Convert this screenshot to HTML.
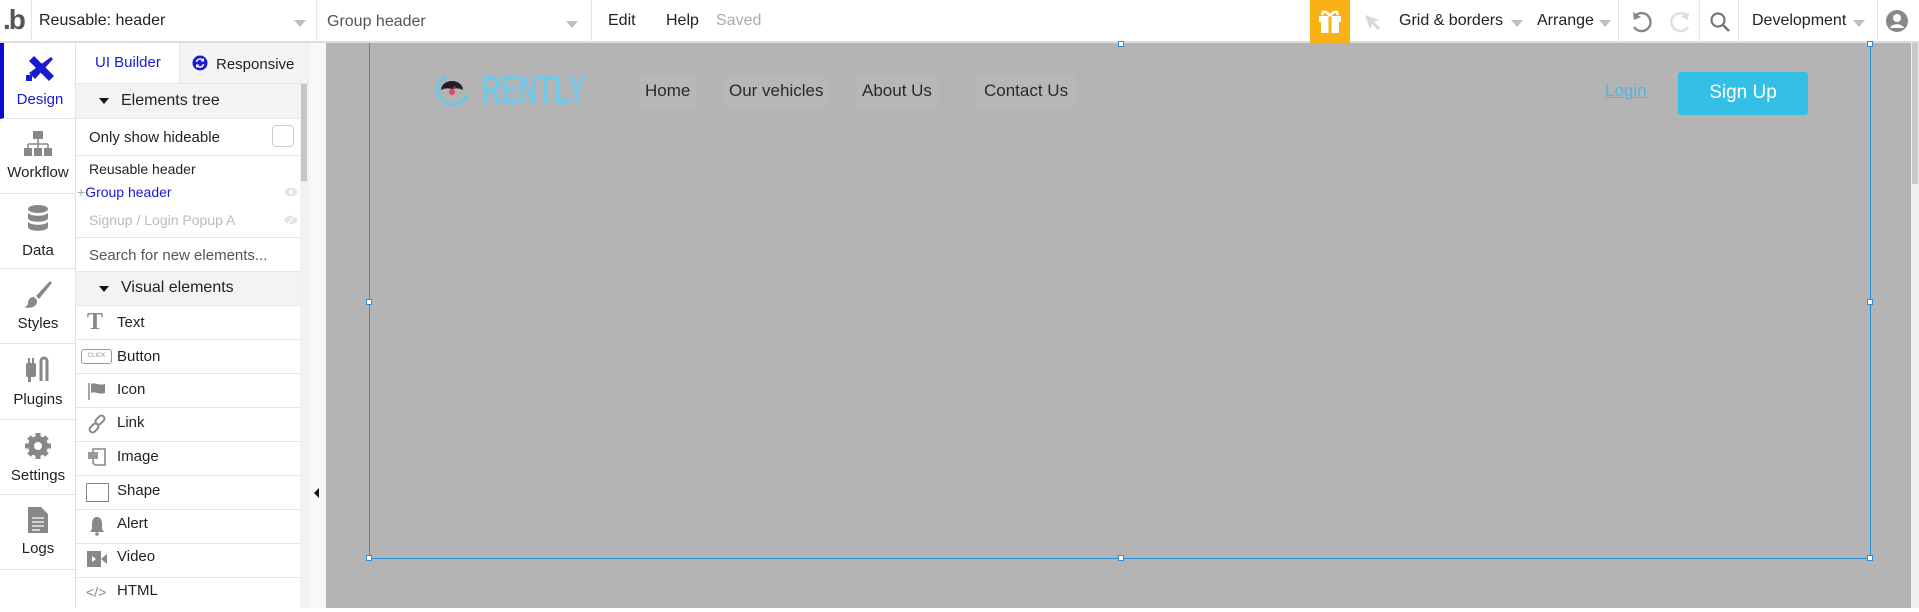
<!DOCTYPE html>
<html><head><meta charset="utf-8"><style>
*{box-sizing:border-box;margin:0;padding:0}
body{width:1919px;height:608px;overflow:hidden;font-family:"Liberation Sans",sans-serif;background:#fff;position:relative;color:#222}
.a{position:absolute}
.t{position:absolute;white-space:nowrap}
.arr{position:absolute;width:0;height:0;border-left:6px solid transparent;border-right:6px solid transparent;border-top:7px solid #b8c0c8}
.sep{position:absolute;top:0;width:1px;height:43px;background:#e6e6e6}
.side{position:absolute;left:0;width:76px;text-align:center;font-size:15px;color:#222;border-bottom:1px solid #e2e2e2}
.row{position:absolute;left:76px;width:224px;border-bottom:1px solid #e8e8e8;font-size:15px}
.nav{position:absolute;top:75px;height:33px;background:#b7b7b7;font-size:17px;color:#2a2a2a;line-height:31px;padding:0 6px}
.h{position:absolute;width:6px;height:6px;background:#fff;border:1px solid #2b8fd6}
</style></head><body>
<div class="a" style="left:0;top:0;width:1919px;height:43px;border-bottom:2px solid #dcdcdc;background:#fff"></div>
<div class="t" style="left:3px;top:4px;font-size:28px;color:#555;font-weight:bold;letter-spacing:-2px">.b</div>
<div class="sep" style="left:31px"></div>
<div class="t" style="left:39px;top:12px;font-size:16px">Reusable: header</div>
<div class="arr" style="left:294px;top:20px"></div>
<div class="sep" style="left:316px"></div>
<div class="t" style="left:327px;top:13px;font-size:16px;color:#555">Group header</div>
<div class="arr" style="left:566px;top:21px"></div>
<div class="sep" style="left:591px"></div>
<div class="t" style="left:608px;top:12px;font-size:16px">Edit</div>
<div class="t" style="left:666px;top:12px;font-size:16px">Help</div>
<div class="t" style="left:716px;top:12px;font-size:16px;color:#aaa">Saved</div>
<div class="a" style="left:1310px;top:0;width:40px;height:43px;background:#f8b215"></div>
<svg class="a" style="left:1316px;top:8px" width="28" height="26" viewBox="0 0 28 26"><rect x="3" y="8" width="22" height="6" fill="#fff"/><rect x="5" y="14" width="18" height="11" fill="#fff"/><rect x="12.5" y="8" width="3" height="17" fill="#f8b215"/><path d="M14 8C10 2 5 3 7 7M14 8c4-6 9-5 7-1" stroke="#fff" stroke-width="2.5" fill="none"/></svg>
<svg class="a" style="left:1362px;top:12px" width="22" height="22" viewBox="0 0 22 22"><path d="M3 3l14 5-5 2 6 6-2 2-6-6-2 5z" fill="#d8d8d8"/></svg>
<div class="t" style="left:1399px;top:12px;font-size:16px">Grid &amp; borders</div>
<div class="arr" style="left:1511px;top:20px"></div>
<div class="t" style="left:1537px;top:12px;font-size:16px">Arrange</div>
<div class="arr" style="left:1599px;top:20px"></div>
<div class="sep" style="left:1618px"></div>
<svg class="a" style="left:1628px;top:9px" width="26" height="26" viewBox="0 0 26 26"><path d="M8 6a9 9 0 1 1-2 12" stroke="#888" stroke-width="2.4" fill="none"/><path d="M5 3l1 8 7-3z" fill="#888"/></svg>
<svg class="a" style="left:1668px;top:9px" width="26" height="26" viewBox="0 0 26 26"><path d="M18 6a9 9 0 1 0 2 12" stroke="#ddd" stroke-width="2.4" fill="none"/><path d="M21 3l-1 8-7-3z" fill="#ddd"/></svg>
<div class="sep" style="left:1699px"></div>
<svg class="a" style="left:1708px;top:10px" width="24" height="24" viewBox="0 0 24 24"><circle cx="10" cy="10" r="6.5" stroke="#777" stroke-width="2.2" fill="none"/><path d="M15 15l6 6" stroke="#777" stroke-width="2.6"/></svg>
<div class="sep" style="left:1738px"></div>
<div class="t" style="left:1752px;top:12px;font-size:16px">Development</div>
<div class="arr" style="left:1853px;top:20px"></div>
<div class="sep" style="left:1877px"></div>
<svg class="a" style="left:1885px;top:9px" width="24" height="24" viewBox="0 0 24 24"><circle cx="12" cy="12" r="11" fill="#888"/><circle cx="12" cy="9" r="4" fill="#fff"/><path d="M5 19c2-5 12-5 14 0" fill="#fff"/></svg>

<div class="a" style="left:75px;top:43px;width:1px;height:565px;background:#e2e2e2"></div>
<div class="side" style="top:43px;height:76px;color:#1a1ad0;border-left:4px solid #0b0bcf">
<svg style="margin-top:10px" width="30" height="30" viewBox="0 0 30 30"><path d="M4 8l5-5 20 20-5 5z" fill="#1a1ad0"/><path d="M26 4l-22 16 6 6 18-20z" fill="#1a1ad0"/><rect x="1" y="22" width="6" height="6" fill="#1a1ad0"/></svg>
<div style="margin-top:4px">Design</div></div>
<div class="side" style="top:119px;height:75px">
<svg style="margin-top:11px" width="30" height="28" viewBox="0 0 30 28"><rect x="10" y="1" width="10" height="8" fill="#888"/><path d="M15 9v5M5 14h20M5 14v4M15 14v4M25 14v4" stroke="#888" stroke-width="1.5" fill="none"/><rect x="1" y="18" width="8" height="8" fill="#888"/><rect x="11" y="18" width="8" height="8" fill="#888"/><rect x="21" y="18" width="8" height="8" fill="#888"/></svg>
<div style="margin-top:2px">Workflow</div></div>
<div class="side" style="top:194px;height:75px">
<svg style="margin-top:10px" width="24" height="30" viewBox="0 0 24 30"><ellipse cx="12" cy="5" rx="10" ry="4" fill="#888"/><path d="M2 8c0 5 20 5 20 0v6c0 5-20 5-20 0zM2 17c0 5 20 5 20 0v6c0 5-20 5-20 0z" fill="#888"/></svg>
<div style="margin-top:4px">Data</div></div>
<div class="side" style="top:269px;height:75px">
<svg style="margin-top:10px" width="30" height="30" viewBox="0 0 30 30"><path d="M27 2L13 17l3 3 13-16z" fill="#888"/><path d="M11 18c-5 0-6 4-6 6s-2 4-4 4c6 2 14 0 13-7z" fill="#888"/></svg>
<div style="margin-top:2px">Styles</div></div>
<div class="side" style="top:344px;height:76px">
<svg style="margin-top:11px" width="30" height="30" viewBox="0 0 30 30"><rect x="3" y="8" width="10" height="14" rx="2" fill="#888"/><rect x="5" y="3" width="2" height="6" fill="#888"/><rect x="9" y="3" width="2" height="6" fill="#888"/><rect x="5" y="22" width="3" height="5" fill="#888"/><path d="M18 26V6a3 3 0 0 1 6 0v20" stroke="#888" stroke-width="3" fill="none"/></svg>
<div style="margin-top:2px">Plugins</div></div>
<div class="side" style="top:420px;height:75px">
<svg style="margin-top:11px" width="30" height="30" viewBox="0 0 30 30"><circle cx="15" cy="15" r="10" fill="#888"/><g stroke="#888" stroke-width="5"><path d="M15 2v26M2 15h26M6 6l18 18M24 6L6 24"/></g><circle cx="15" cy="15" r="4" fill="#fff"/></svg>
<div style="margin-top:2px">Settings</div></div>
<div class="side" style="top:495px;height:75px">
<svg style="margin-top:11px" width="22" height="28" viewBox="0 0 22 28"><path d="M1 1h13l7 7v19H1z" fill="#888"/><path d="M5 12h12M5 16h12M5 20h12M5 24h8" stroke="#fff" stroke-width="1.3"/></svg>
<div style="margin-top:2px">Logs</div></div>

<div class="a" style="left:179px;top:43px;width:129px;height:41px;background:#f4f4f4;border-left:1px solid #e4e4e4;border-bottom:1px solid #e4e4e4"></div>
<div class="a" style="left:76px;top:83px;width:103px;height:1px;background:#e4e4e4"></div>
<div class="t" style="left:95px;top:54px;font-size:15px;color:#1a1ad0">UI Builder</div>
<svg class="a" style="left:192px;top:55px" width="16" height="16" viewBox="0 0 16 16"><circle cx="8" cy="8" r="7.5" fill="#1a1ad0"/><path d="M4.5 7a3.6 3.6 0 0 1 6.5-1.5M11.5 9a3.6 3.6 0 0 1-6.5 1.5" stroke="#fff" stroke-width="1.5" fill="none"/><path d="M12 3v3.5H8.5zM4 13V9.5h3.5z" fill="#fff"/></svg>
<div class="t" style="left:216px;top:56px;font-size:15px">Responsive</div>
<div class="row" style="top:84px;height:35px;background:#f3f3f3"></div>
<div class="a" style="left:99px;top:98px;border-left:5px solid transparent;border-right:5px solid transparent;border-top:6px solid #111"></div>
<div class="t" style="left:121px;top:92px;font-size:16px">Elements tree</div>
<div class="row" style="top:119px;height:37px"></div>
<div class="t" style="left:89px;top:129px;font-size:15px">Only show hideable</div>
<div class="a" style="left:272px;top:125px;width:22px;height:22px;border:1px solid #ccc;border-radius:4px"></div>
<div class="row" style="top:156px;height:82px"></div>
<div class="t" style="left:89px;top:161px;font-size:14px">Reusable header</div>
<div class="t" style="left:77px;top:184px;font-size:14px;color:#1a1ad0"><span style="color:#aaa">+</span>Group header</div>
<div class="t" style="left:89px;top:212px;font-size:14px;color:#bbb">Signup / Login Popup A</div>
<svg class="a" style="left:284px;top:187px" width="14" height="10" viewBox="0 0 14 10"><ellipse cx="7" cy="5" rx="6.5" ry="4.2" fill="#e4e4e4"/><circle cx="7" cy="5" r="2" fill="#fff"/></svg>
<svg class="a" style="left:284px;top:215px" width="14" height="10" viewBox="0 0 14 10"><ellipse cx="7" cy="5" rx="6.5" ry="4.2" fill="#e4e4e4"/><path d="M3 10L11 0" stroke="#fff" stroke-width="1.2"/></svg>
<div class="row" style="top:238px;height:34px"></div>
<div class="t" style="left:89px;top:247px;font-size:15px;color:#555">Search for new elements...</div>
<div class="row" style="top:272px;height:34px;background:#f3f3f3"></div>
<div class="a" style="left:99px;top:286px;border-left:5px solid transparent;border-right:5px solid transparent;border-top:6px solid #111"></div>
<div class="t" style="left:121px;top:279px;font-size:16px">Visual elements</div>

<div class="row" style="top:306px;height:34px"></div><div class="t" style="left:87px;top:309px;font-size:24px;font-family:'Liberation Serif',serif;font-weight:bold;color:#888">T</div><div class="t" style="left:117px;top:314px;font-size:15px">Text</div>
<div class="row" style="top:340px;height:34px"></div><div class="a" style="left:81px;top:349px;width:31px;height:15px;border:1.5px solid #999;border-radius:3px;font-size:6px;color:#999;text-align:center;line-height:12px">CLICK</div><div class="t" style="left:117px;top:348px;font-size:15px">Button</div>
<div class="row" style="top:374px;height:34px"></div><svg class="a" style="left:88px;top:382px" width="20" height="18" viewBox="0 0 20 18"><path d="M1 1v17" stroke="#888" stroke-width="1.5"/><path d="M3 2c5-2 7 2 14 0v9c-7 2-9-2-14 0z" fill="#888"/></svg><div class="t" style="left:117px;top:381px;font-size:15px">Icon</div>
<div class="row" style="top:408px;height:34px"></div><svg class="a" style="left:87px;top:414px" width="20" height="20" viewBox="0 0 20 20"><g stroke="#888" stroke-width="2" fill="none"><rect x="10" y="1" width="6" height="10" rx="3" transform="rotate(45 13 6)"/><rect x="4" y="9" width="6" height="10" rx="3" transform="rotate(45 7 14)"/></g></svg><div class="t" style="left:117px;top:414px;font-size:15px">Link</div>
<div class="row" style="top:442px;height:34px"></div><svg class="a" style="left:87px;top:447px" width="20" height="20" viewBox="0 0 20 20"><path d="M6 2h12v16H8l-2-2z" fill="none" stroke="#888" stroke-width="1.6"/><rect x="1" y="5" width="10" height="7" fill="#999"/></svg><div class="t" style="left:117px;top:448px;font-size:15px">Image</div>
<div class="row" style="top:476px;height:34px"></div><div class="a" style="left:86px;top:483px;width:23px;height:19px;border:1.5px solid #888"></div><div class="t" style="left:117px;top:482px;font-size:15px">Shape</div>
<div class="row" style="top:510px;height:34px"></div><svg class="a" style="left:89px;top:516px" width="16" height="20" viewBox="0 0 16 20"><path d="M8 1c-4 0-5 4-5 7v5l-2 3h14l-2-3V8c0-3-1-7-5-7z" fill="#888"/><circle cx="8" cy="18" r="1.8" fill="#888"/></svg><div class="t" style="left:117px;top:515px;font-size:15px">Alert</div>
<div class="row" style="top:544px;height:34px"></div><svg class="a" style="left:87px;top:551px" width="20" height="16" viewBox="0 0 20 16"><rect x="0" y="0" width="14" height="16" fill="#888"/><path d="M14 8l6-5v10z" fill="#888"/><path d="M5 5l4 3-4 3z" fill="#fff"/></svg><div class="t" style="left:117px;top:548px;font-size:15px">Video</div>
<div class="row" style="top:578px;height:34px;border:none"></div><div class="t" style="left:86px;top:584px;font-size:14px;color:#888">&lt;/&gt;</div><div class="t" style="left:117px;top:582px;font-size:15px">HTML</div>

<div class="a" style="left:300px;top:84px;width:8px;height:524px;background:#f2f2f2"></div>
<div class="a" style="left:301px;top:84px;width:6px;height:97px;background:#c6c6c6"></div>
<div class="a" style="left:308px;top:43px;width:18px;height:565px;background:#f8f8f8;border-left:1px solid #eee"></div>
<div class="a" style="left:314px;top:488px;border-top:5px solid transparent;border-bottom:5px solid transparent;border-right:5px solid #111"></div>

<div class="a" style="left:326px;top:43px;width:1593px;height:565px;background:#b4b4b4"></div>
<div class="a" style="left:1911px;top:43px;width:8px;height:565px;background:#f0f0f0"></div>
<div class="a" style="left:1912px;top:43px;width:6px;height:141px;background:#c8c8c8"></div>
<div class="a" style="left:369px;top:43px;width:1502px;height:516px;border:1px solid #2b8fd6;border-top:none"></div>
<div class="h" style="left:1118px;top:41px"></div><div class="h" style="left:1867px;top:41px"></div>
<div class="h" style="left:366px;top:299px"></div><div class="h" style="left:1867px;top:299px"></div>
<div class="h" style="left:366px;top:555px"></div><div class="h" style="left:1118px;top:555px"></div><div class="h" style="left:1867px;top:555px"></div>

<svg class="a" style="left:434px;top:72px" width="38" height="38" viewBox="0 0 38 38"><path d="M12 4A15 15 0 1 0 33 22" stroke="#6fc6e4" stroke-width="3.5" fill="none"/><path d="M7 18a11 9 0 0 1 22 0c-4-2-6-2-11-1-5-1-7-1-11 1z" fill="#1e1e24"/><circle cx="18" cy="20" r="3" fill="#e0496b"/><path d="M18 20l3-6" stroke="#e0496b" stroke-width="1"/></svg>
<div class="t" style="left:482px;top:68px;font-size:40px;font-weight:bold;color:#72c8e6;transform:scaleX(.66);transform-origin:left;line-height:44px">RENTLY</div>
<div class="nav" style="left:639px">Home</div>
<div class="nav" style="left:723px">Our vehicles</div>
<div class="nav" style="left:856px">About Us</div>
<div class="nav" style="left:976px;padding:0 8px">Contact Us</div>
<div class="t" style="left:1605px;top:81px;font-size:17px;color:#45b9e3;text-decoration:underline">Login</div>
<div class="a" style="left:1678px;top:72px;width:130px;height:43px;background:#34bfe6;border-radius:3px;color:#fff;font-size:19px;text-align:center;line-height:42px">Sign Up</div>
</body></html>
